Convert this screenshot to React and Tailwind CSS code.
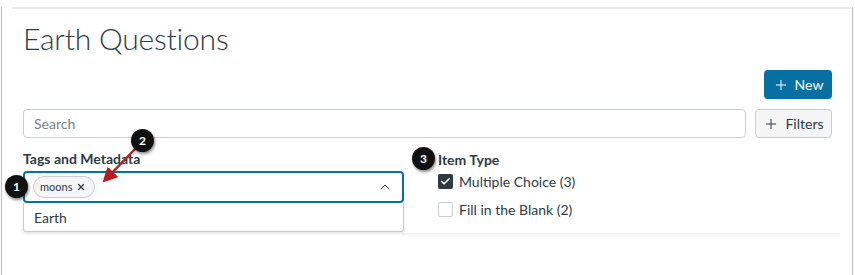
import React from 'react';
import { Plus, X, ChevronUp, Check } from 'lucide-react';

function Badge({ n, className }) {
  return (
    <div
      className={`absolute flex h-[23px] w-[23px] items-center justify-center rounded-full bg-[#111] text-[12px] font-bold text-white shadow-[1px_2px_3px_rgba(0,0,0,0.45)] ${className}`}
    >
      {n}
    </div>
  );
}

export default function App() {
  return (
    <div className="relative h-[275px] w-[855px] overflow-hidden bg-white font-['Lato','Liberation_Sans',sans-serif] text-[#2d3b45]">
      <div className="ml-px h-[272px] w-[852px] border-x border-b border-[#bfbfbf] shadow-[0_1px_1px_rgba(0,0,0,0.15)]">
        <div className="ml-[10px] mt-[7px] h-[2px] w-[840px] bg-[#e8eaec]" />

        <div className="pl-[21px] pr-[20px]">
          <h1 className="mt-[11px] text-[30px] font-light leading-[36px] tracking-[-0.2px]">Earth Questions</h1>

          <div className="mt-[14px] flex justify-end">
            <button className="flex h-[29px] w-[68px] items-center justify-center gap-[6px] rounded-[4px] bg-[#0770a3] text-[14px] text-white">
              <Plus size={16} strokeWidth={1.5} />
              New
            </button>
          </div>

          <div className="mt-[10px] flex gap-[9px]">
            <div className="flex h-[29px] flex-1 items-center rounded-[4px] border border-[#c7cdd1] px-[10px] text-[14px] text-[#73818c]">
              Search
            </div>
            <button className="flex h-[29px] w-[77px] items-center justify-center gap-[6px] rounded-[4px] border border-[#c7cdd1] bg-[#f5f5f5] text-[14px]">
              <Plus size={16} strokeWidth={1.5} />
              Filters
            </button>
          </div>

          <div className="mt-[12px] flex">
            <div className="w-[381px]">
              <div className="text-[14px] font-bold leading-[18px]">Tags and Metadata</div>
              <div className="mt-[3px] flex h-[32px] items-center rounded-[4px] border-2 border-[#0770a3] pl-[8px] pr-[9px]">
                <span className="flex h-[22px] w-[62px] items-center justify-between rounded-full border border-[#c7cdd1] bg-[#f5f5f5] pl-[6px] pr-[8px] text-[11px]">
                  moons
                  <X size={10} strokeWidth={3} />
                </span>
                <ChevronUp size={16} strokeWidth={1.5} className="ml-auto" />
              </div>
              <div className="h-[29px] rounded-b-[3px] border border-t-0 border-[#c7cdd1] bg-white px-[10px] text-[14px] leading-[29px] shadow-[0_2px_3px_rgba(0,0,0,0.1)]">
                Earth
              </div>
            </div>

            <div className="ml-[34px] mt-px">
              <div className="text-[14px] font-bold leading-[18px]">Item Type</div>
              <div className="mt-[2px] flex h-[20px] items-center gap-[6px] text-[14px]">
                <span className="flex h-[15px] w-[15px] items-center justify-center rounded-[2px] bg-[#2d3b45] text-white">
                  <Check size={11} strokeWidth={3.5} />
                </span>
                Multiple Choice (3)
              </div>
              <div className="mt-[8px] flex h-[20px] items-center gap-[6px] text-[14px]">
                <span className="h-[15px] w-[15px] rounded-[2px] border border-[#c7cdd1] bg-white" />
                Fill in the Blank (2)
              </div>
            </div>
          </div>
        </div>
        <div className="ml-[400px] mt-px h-[4px] w-[438px] bg-gradient-to-b from-[#f0f0f0] to-white" />
      </div>

      <svg className="pointer-events-none absolute left-0 top-0" width="855" height="275">
        <defs>
          <marker id="ah" markerWidth="6" markerHeight="6" refX="4" refY="3" orient="auto">
            <path d="M0,0 L6,3 L0,6 Z" fill="#b71c1c" />
          </marker>
        </defs>
        <line x1="136" y1="148" x2="106" y2="179" stroke="#b71c1c" strokeWidth="2.5" markerEnd="url(#ah)" />
      </svg>

      <Badge n="1" className="left-[5px] top-[175px]" />
      <Badge n="2" className="left-[131px] top-[129px]" />
      <Badge n="3" className="left-[412px] top-[147px]" />
    </div>
  );
}
